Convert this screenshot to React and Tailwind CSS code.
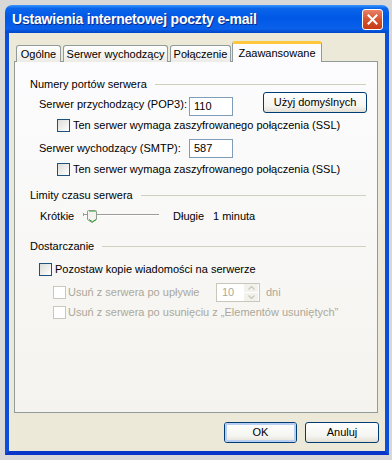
import React from "react";

const Check = ({ disabled }) => (
  <span
    className={`block w-[13px] h-[13px] border shrink-0 ${
      disabled
        ? "border-[#cac8bb] bg-white"
        : "border-[#1c5180] bg-[linear-gradient(135deg,#dcdcd7,#ffffff)]"
    }`}
  />
);

const GroupHeader = ({ children }) => (
  <div className="flex items-center h-[14px] pl-[15px] pr-[11px]">
    <span className="whitespace-nowrap">{children}</span>
    <span className="flex-1 ml-[8px] h-px bg-[#d0d0bf]" />
  </div>
);

const Input = ({ value }) => (
  <div className="w-[44px] h-[19px] border border-[#7f9db9] bg-white flex items-center pl-[4px]">
    {value}
  </div>
);

const XpButton = ({ children, className = "", isDefault = false }) => (
  <div
    className={`h-[21px] rounded-[3px] border border-[#003c74] bg-[linear-gradient(180deg,#ffffff,#f4f4f0_70%,#e3ded3)] flex items-center justify-center ${className}`}
  >
    {isDefault ? (
      <div className="w-full h-full rounded-[2px] border-2 border-[#b8cff3] flex items-center justify-center">
        {children}
      </div>
    ) : (
      children
    )}
  </div>
);

const Tab = ({ label, width, selected = false, className = "" }) => (
  <div
    className={`${width} ${
      selected
        ? "h-[21px] bg-[#fcfcfe] border-x border-[#919b9c] border-t-[3px] border-t-[#ffc83c] rounded-t-[3px] z-10"
        : "h-[17px] bg-[linear-gradient(180deg,#ffffff,#ecebe6)] border border-b-0 border-[#919b9c] rounded-t-[3px]"
    } flex items-center justify-center whitespace-nowrap ${className}`}
  >
    {label}
  </div>
);

const Slider = () => (
  <svg width="78" height="20" viewBox="0 0 78 20">
    <rect x="1" y="8" width="76" height="1" fill="#9d9c99" />
    <rect x="1" y="9" width="76" height="1" fill="#ffffff" />
    <rect x="1" y="7" width="1" height="3" fill="#9d9c99" />
    <path
      d="M6.5 4.5 h7 a1 1 0 0 1 1 1 v8 l-4.5 3 l-4.5 -3 v-8 a1 1 0 0 1 1 -1 z"
      fill="#f4f3ee"
      stroke="#8d9b8c"
    />
    <path d="M7 13.5 l3.5 2.3 l3.5 -2.3" fill="none" stroke="#21a121" />
    <rect x="7" y="5" width="7" height="1" fill="#7fd07f" />
  </svg>
);

const Spinner = () => (
  <div className="w-[44px] h-[19px] border border-[#c9c7ba] bg-white flex items-center">
    <span className="flex-1 pl-[5px] text-[#aca899]">10</span>
    <div className="w-[15px] h-[17px] flex flex-col gap-px bg-white pr-px">
      <div className="flex-1 bg-[#f2f1ec] rounded-[1px] flex items-center justify-center">
        <svg width="7" height="4" viewBox="0 0 7 4">
          <path d="M0.5 3.5 L3.5 0.5 L6.5 3.5" fill="none" stroke="#c9c7ba" strokeWidth="1.2" />
        </svg>
      </div>
      <div className="flex-1 bg-[#f2f1ec] rounded-[1px] flex items-center justify-center">
        <svg width="7" height="4" viewBox="0 0 7 4">
          <path d="M0.5 0.5 L3.5 3.5 L6.5 0.5" fill="none" stroke="#c9c7ba" strokeWidth="1.2" />
        </svg>
      </div>
    </div>
  </div>
);

export default function App() {
  return (
    <div className="w-[392px] h-[460px] bg-[#d8d8d8] pt-[5px] pl-[5px] font-['Liberation_Sans',Arial,sans-serif] text-[11px] text-black leading-none">
      <div className="w-[384px] h-[450px] flex flex-col">
        {/* title bar */}
        <div className="h-[28px] shrink-0 rounded-t-[7px] bg-[linear-gradient(180deg,#3d95ff_0%,#0a66ea_12%,#0058e6_45%,#0a60ea_85%,#0047c8_100%)] flex items-center pl-[7px] pr-[6px]">
          <span className="flex-1 text-white font-bold text-[14px] tracking-[-0.2px] [text-shadow:1px_1px_0_#0a2a8a]">
            Ustawienia internetowej poczty e-mail
          </span>
          <div className="w-[21px] h-[21px] rounded-[3px] border border-white bg-[linear-gradient(180deg,#e9826a,#d5532e_50%,#c63a14)] flex items-center justify-center">
            <svg width="11" height="11" viewBox="0 0 11 11">
              <path d="M1.5 1.5 L9.5 9.5 M9.5 1.5 L1.5 9.5" stroke="#ffffff" strokeWidth="2" strokeLinecap="square" />
            </svg>
          </div>
        </div>

        {/* client */}
        <div className="flex-1 border-x-4 border-b-4 border-[#0b4fd8] border-b-[#0836c8] bg-[#ece9d8] flex flex-col">
          <div className="pt-[8px] pl-[5px] pr-[7px] flex flex-col">
            {/* tabs */}
            <div className="flex items-end h-[21px] pl-[2px] -mb-px relative">
              <Tab label="Ogólne" width="w-[45px]" />
              <Tab label="Serwer wychodzący" width="w-[105px]" className="ml-[2px]" />
              <Tab label="Połączenie" width="w-[61px]" className="ml-[2px]" />
              <Tab
                label="Zaawansowane"
                width="w-[90px]"
                selected
                className="ml-px"
              />
            </div>

            {/* panel */}
            <div className="h-[352px] border border-[#919b9c] bg-[linear-gradient(180deg,#fcfcfe,#f4f3ee)] flex flex-col">
              <div className="mt-[15px]">
                <GroupHeader>Numery portów serwera</GroupHeader>
              </div>

              <div className="mt-px h-[23px] flex items-start pl-[24px]">
                <span className="w-[150px] mt-[7px] whitespace-nowrap">Serwer przychodzący (POP3):</span>
                <div className="mt-[5px]">
                  <Input value="110" />
                </div>
                <XpButton className="ml-[30px] w-[104px]">Użyj domyślnych</XpButton>
              </div>

              <div className="mt-[4px] h-[13px] flex items-center pl-[42px] gap-[3px]">
                <Check />
                <span className="whitespace-nowrap">Ten serwer wymaga zaszyfrowanego połączenia (SSL)</span>
              </div>

              <div className="mt-[6px] h-[20px] flex items-center pl-[24px]">
                <span className="w-[150px] whitespace-nowrap">Serwer wychodzący (SMTP):</span>
                <Input value="587" />
              </div>

              <div className="mt-[5px] h-[13px] flex items-center pl-[42px] gap-[3px]">
                <Check />
                <span className="whitespace-nowrap">Ten serwer wymaga zaszyfrowanego połączenia (SSL)</span>
              </div>

              <div className="mt-[12px]">
                <GroupHeader>Limity czasu serwera</GroupHeader>
              </div>

              <div className="mt-[4px] h-[20px] flex items-center pl-[25px]">
                <span className="w-[42px]">Krótkie</span>
                <Slider />
                <span className="ml-[13px] w-[40px]">Długie</span>
                <span>1 minuta</span>
              </div>

              <div className="mt-[13px]">
                <GroupHeader>Dostarczanie</GroupHeader>
              </div>

              <div className="mt-[10px] h-[13px] flex items-center pl-[24px] gap-[3px]">
                <Check />
                <span className="whitespace-nowrap">Pozostaw kopie wiadomości na serwerze</span>
              </div>

              <div className="mt-[7px] h-[19px] flex items-center pl-[38px]">
                <div className="w-[163px] flex items-center gap-[2px] text-[#aca899]">
                  <Check disabled />
                  <span className="whitespace-nowrap">Usuń z serwera po upływie</span>
                </div>
                <Spinner />
                <span className="ml-[6px] text-[#aca899]">dni</span>
              </div>

              <div className="mt-[4px] h-[13px] flex items-center pl-[38px] gap-[2px] text-[#aca899]">
                <Check disabled />
                <span className="whitespace-nowrap">Usuń z serwera po usunięciu z „Elementów usuniętych”</span>
              </div>
            </div>
          </div>

          {/* buttons */}
          <div className="mt-[9px] flex justify-end gap-[8px] pr-[6px]">
            <XpButton className="w-[73px]" isDefault>
              OK
            </XpButton>
            <XpButton className="w-[74px]">Anuluj</XpButton>
          </div>
        </div>
      </div>
    </div>
  );
}
